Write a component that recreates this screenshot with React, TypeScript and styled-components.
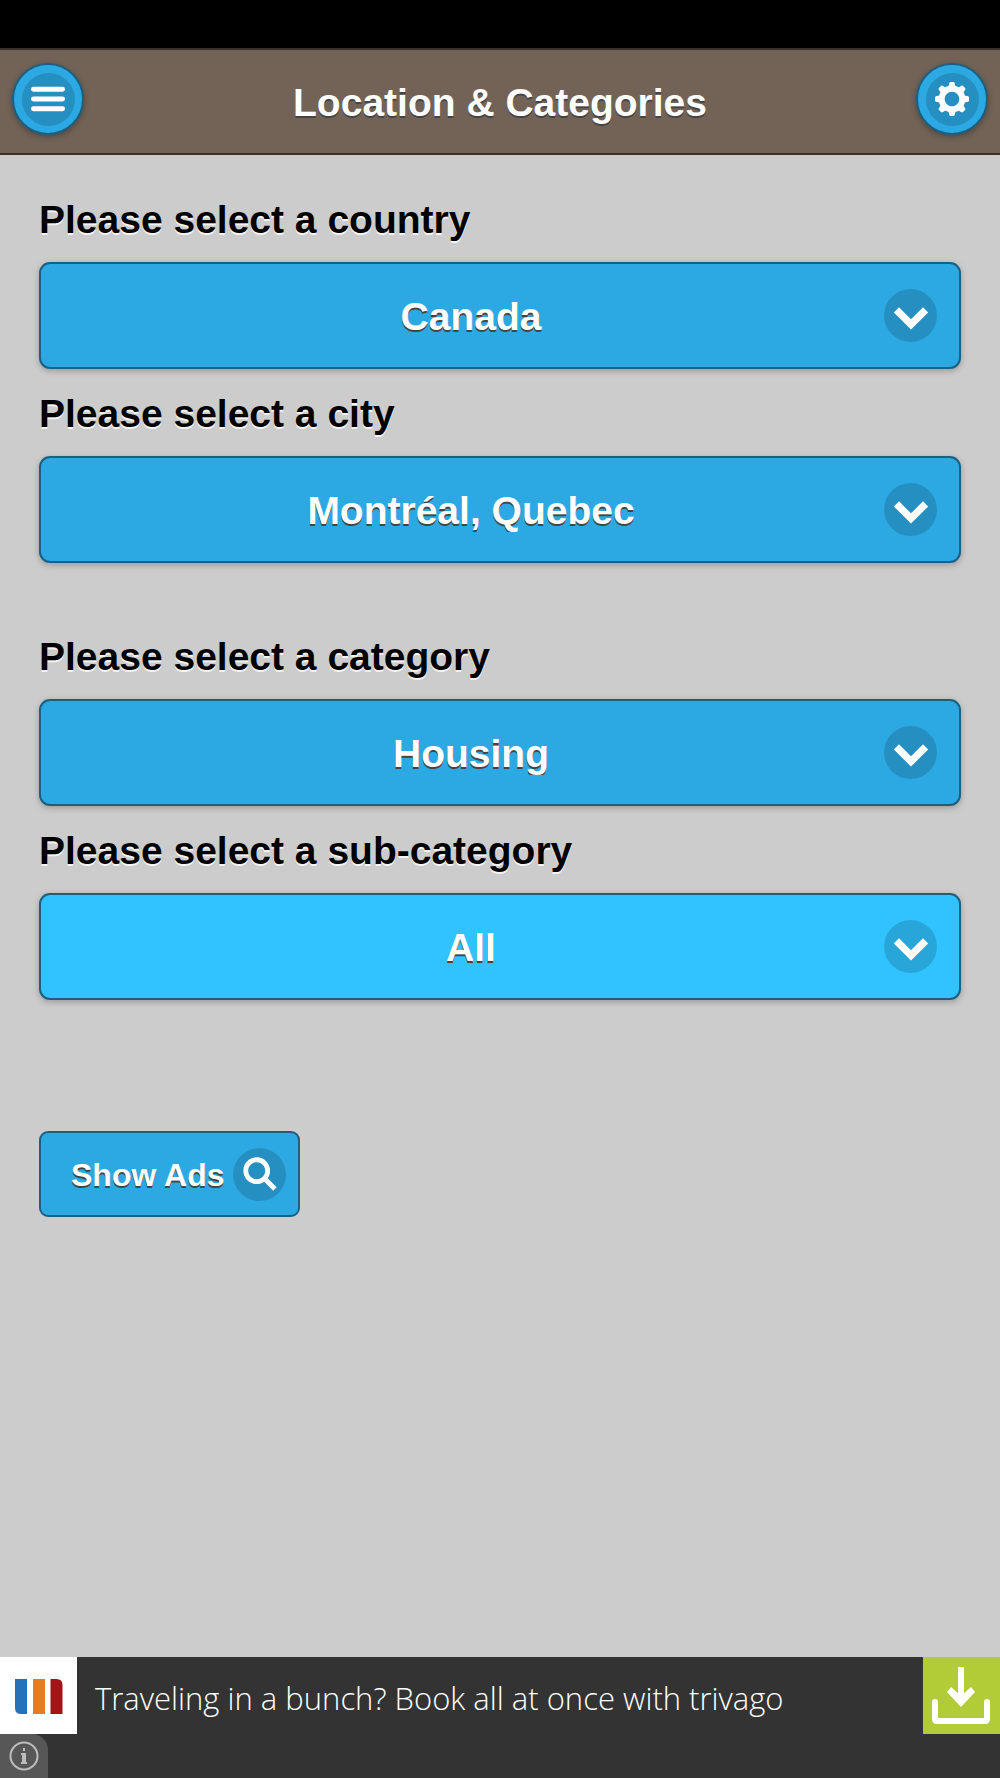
import React, { useId } from "react";
import styled, { createGlobalStyle } from "styled-components";

const color = {
  page: "#cccccc",
  header: "#736357",
  headerEdge: "#3b2f28",
  button: "#2ca9e3",
  buttonActive: "#31c3ff",
  edge: "#1b6082",
  disc: "rgba(0, 0, 0, 0.15)",
  ad: "#333333",
  lime: "#b2cc38",
};

const GlobalStyle = createGlobalStyle`
  *, *::before, *::after { box-sizing: border-box; }
  body {
    margin: 0;
    background: ${color.page};
    font-family: "Liberation Sans", Arial, Helvetica, sans-serif;
  }
`;

const Screen = styled.div`
  display: flex;
  flex-direction: column;
  min-height: 100vh;
`;

const StatusBar = styled.div`
  height: 48px;
  background: #000;
`;

const Header = styled.header`
  display: grid;
  grid-template-columns: 72px 1fr 72px;
  align-items: start;
  padding: 13px 12px 10px;
  background: ${color.header};
  border-top: 2px solid ${color.headerEdge};
  border-bottom: 2px solid ${color.headerEdge};
`;

const Title = styled.h1`
  margin: 0;
  color: #fff;
  font-size: 39px;
  line-height: 80px;
  text-align: center;
  text-shadow: 0 2px 0 #444;
`;

const RoundButton = styled.button`
  display: grid;
  place-items: center;
  width: 72px;
  height: 72px;
  padding: 0;
  border: 2px solid ${color.edge};
  border-radius: 50%;
  background: ${color.button};
  box-shadow: 0 2px 6px rgba(0, 0, 0, 0.3);
`;

const Disc = styled.span`
  display: grid;
  flex: none;
  place-items: center;
  width: 53px;
  height: 53px;
  border-radius: 50%;
  background: ${color.disc};
`;

const Glyph = styled.svg`
  display: block;
  width: 34px;
  height: 34px;
  overflow: visible;
  fill: #fff;
`;

const Form = styled.form`
  flex: 1;
  padding: 39px;
`;

const Group = styled.div`
  display: grid;
  gap: 19px;
  margin-bottom: 68px;
`;

const Field = styled.div`
  display: grid;
  gap: 16px;
`;

const Label = styled.label`
  color: #000;
  font-size: 39px;
  font-weight: bold;
  line-height: 52px;
  text-shadow: 0 2px 0 #f3f3f3;
`;

const Picker = styled.div`
  display: grid;
  align-items: center;

  & > * {
    grid-area: 1 / 1;
  }
`;

const Select = styled.select<{ $active?: boolean }>`
  appearance: none;
  width: 100%;
  height: 107px;
  padding: 2px 84px 0 26px;
  border: 2px solid ${color.edge};
  border-radius: 11px;
  background: ${(p) => (p.$active ? color.buttonActive : color.button)};
  box-shadow: 0 2px 6px rgba(0, 0, 0, 0.25);
  color: #fff;
  font: bold 39px "Liberation Sans", Arial, Helvetica, sans-serif;
  text-align: center;
  text-align-last: center;
  text-shadow: 0 2px 0 #444;
`;

const PickerIcon = styled(Disc)`
  justify-self: end;
  margin-right: 24px;
  pointer-events: none;
`;

const SubmitButton = styled.button`
  display: inline-flex;
  align-items: center;
  gap: 9px;
  height: 86px;
  margin-top: 63px;
  padding: 0 12px 0 30px;
  border: 2px solid ${color.edge};
  border-radius: 9px;
  background: ${color.button};
  color: #fff;
  font: bold 32px "Liberation Sans", Arial, Helvetica, sans-serif;
  text-shadow: 0 2px 0 #444;
`;

const SubmitText = styled.span`
  padding-top: 2px;
`;

const AdBar = styled.aside`
  height: 121px;
  background: ${color.ad};
`;

const AdLink = styled.a`
  display: flex;
  height: 77px;
  color: #fff;
  text-decoration: none;
`;

const AdTile = styled.span<{ $fill: string }>`
  flex: none;
  width: 77px;
  height: 77px;
  background: ${(p) => p.$fill};
`;

const AdText = styled.span`
  flex: 1;
  padding-left: 18px;
  font-family: "Open Sans", sans-serif;
  font-size: 31px;
  font-weight: 300;
  line-height: 83px;
  white-space: nowrap;
`;

const InfoButton = styled.button`
  display: grid;
  place-items: center;
  width: 48px;
  height: 44px;
  padding: 0;
  border: 0;
  border-top-right-radius: 16px;
  background: #575757;
`;

const BarsIcon = () => (
  <Glyph viewBox="0 0 14 14" aria-hidden="true">
    <rect y="2" width="14" height="2" rx="1" />
    <rect y="6" width="14" height="2" rx="1" />
    <rect y="10" width="14" height="2" rx="1" />
  </Glyph>
);

const GearIcon = () => (
  <Glyph viewBox="0 0 14 14" aria-hidden="true">
    <path d="M13.621,5.904l-1.036-0.259c-0.168-0.042-0.303-0.168-0.355-0.332c-0.092-0.284-0.205-0.559-0.339-0.82c-0.079-0.153-0.073-0.337,0.017-0.486l0.549-0.915c0.118-0.196,0.088-0.448-0.075-0.61l-0.862-0.863c-0.162-0.163-0.414-0.193-0.611-0.075l-0.916,0.55C9.844,2.182,9.66,2.188,9.506,2.109C9.244,1.975,8.97,1.861,8.686,1.77c-0.165-0.052-0.29-0.188-0.332-0.354L8.095,0.379C8.039,0.156,7.839,0,7.61,0H6.39C6.161,0,5.961,0.156,5.905,0.379L5.646,1.415C5.604,1.582,5.479,1.718,5.313,1.77c-0.284,0.092-0.559,0.206-0.82,0.34C4.339,2.188,4.155,2.182,4.007,2.093L3.092,1.544c-0.196-0.118-0.448-0.087-0.61,0.075L1.619,2.481C1.457,2.644,1.426,2.896,1.544,3.093l0.549,0.914c0.089,0.148,0.095,0.332,0.017,0.486C1.975,4.755,1.861,5.029,1.77,5.314c-0.053,0.164-0.188,0.29-0.354,0.332L0.379,5.905C0.156,5.961,0,6.161,0,6.39v1.219c0,0.229,0.156,0.43,0.379,0.485l1.036,0.26C1.582,8.396,1.717,8.521,1.77,8.687c0.092,0.284,0.205,0.559,0.34,0.82C2.188,9.66,2.182,9.844,2.093,9.993l-0.549,0.915c-0.118,0.195-0.087,0.448,0.075,0.61l0.862,0.862c0.162,0.163,0.414,0.193,0.61,0.075l0.915-0.549c0.148-0.089,0.332-0.095,0.486-0.017c0.262,0.135,0.536,0.248,0.82,0.34c0.165,0.053,0.291,0.187,0.332,0.354l0.259,1.036C5.961,13.844,6.16,14,6.39,14h1.22c0.229,0,0.429-0.156,0.485-0.379l0.259-1.036c0.042-0.167,0.168-0.302,0.333-0.354c0.284-0.092,0.559-0.205,0.82-0.34c0.154-0.078,0.338-0.072,0.486,0.017l0.914,0.549c0.197,0.118,0.449,0.088,0.611-0.074l0.862-0.863c0.163-0.162,0.193-0.415,0.075-0.611l-0.549-0.915c-0.089-0.148-0.096-0.332-0.017-0.485c0.134-0.263,0.248-0.536,0.339-0.82c0.053-0.165,0.188-0.291,0.355-0.333l1.036-0.259C13.844,8.039,14,7.839,14,7.61V6.39C14,6.161,13.844,5.961,13.621,5.904z M7,10c-1.657,0-3-1.343-3-3s1.343-3,3-3s3,1.343,3,3S8.657,10,7,10z" />
  </Glyph>
);

const CaratIcon = () => (
  <Glyph viewBox="0 0 14 14" aria-hidden="true">
    <polygon points="11.95,3.4 7,8.35 2.05,3.4 -0.07,5.53 7,12.6 14.07,5.53" />
  </Glyph>
);

const SearchIcon = () => (
  <Glyph viewBox="0 0 14 14" aria-hidden="true">
    <path d="M10.171,8.766c0.617-0.888,0.979-1.964,0.979-3.126c0-3.037-2.463-5.5-5.5-5.5s-5.5,2.463-5.5,5.5s2.463,5.5,5.5,5.5c1.152,0,2.223-0.355,3.104-0.962l3.684,3.683l1.414-1.414L10.171,8.766z M5.649,9.14c-1.933,0-3.5-1.567-3.5-3.5c0-1.933,1.567-3.5,3.5-3.5c1.933,0,3.5,1.567,3.5,3.5C9.149,7.572,7.582,9.14,5.649,9.14z" />
  </Glyph>
);

const BrandLogo = () => (
  <svg width="77" height="77" viewBox="0 0 77 77" aria-hidden="true">
    <path d="M15 22h12v35h-6q-6 0-6-6z" fill="#2672b8" />
    <path d="M33 22h12v35H33z" fill="#e47d22" />
    <path d="M50.500 22h6q6 0 6 6v29h-12z" fill="#a11418" />
  </svg>
);

const DownloadIcon = () => (
  <svg width="77" height="77" viewBox="0 0 77 77" fill="none" stroke="#fff" strokeWidth="6" aria-hidden="true">
    <path d="M38 10v32" />
    <path d="M28 30l10 9 10-9 4 5-14 15-14-15z" fill="#fff" stroke="none" />
    <path d="M12 45v17q0 2 2 2h48q2 0 2-2V45" strokeLinecap="round" />
  </svg>
);

const InfoIcon = () => (
  <svg width="30" height="30" viewBox="0 0 30 30" fill="none" stroke="#bdbdbd" strokeWidth="2" aria-hidden="true">
    <circle cx="15" cy="15" r="13.500" />
    <path d="M15 7v3M12 13h3M12 22h6" />
    <path d="M15 12v10" strokeWidth="4" />
  </svg>
);

interface PickFieldProps {
  label: string;
  value: string;
  active?: boolean;
}

function PickField({ label, value, active }: PickFieldProps) {
  const id = useId();
  return (
    <Field>
      <Label htmlFor={id}>{label}</Label>
      <Picker>
        <Select id={id} defaultValue={value} $active={active}>
          <option>{value}</option>
        </Select>
        <PickerIcon>
          <CaratIcon />
        </PickerIcon>
      </Picker>
    </Field>
  );
}

export default function App() {
  return (
    <>
      <GlobalStyle />
      <Screen>
        <StatusBar />
        <Header>
          <RoundButton type="button" aria-label="Menu">
            <Disc>
              <BarsIcon />
            </Disc>
          </RoundButton>
          <Title>Location &amp; Categories</Title>
          <RoundButton type="button" aria-label="Settings">
            <Disc>
              <GearIcon />
            </Disc>
          </RoundButton>
        </Header>
        <Form onSubmit={(e) => e.preventDefault()}>
          <Group>
            <PickField label="Please select a country" value="Canada" />
            <PickField label="Please select a city" value="Montréal, Quebec" />
          </Group>
          <Group>
            <PickField label="Please select a category" value="Housing" />
            <PickField label="Please select a sub-category" value="All" active />
          </Group>
          <SubmitButton type="submit">
            <SubmitText>Show Ads</SubmitText>
            <Disc>
              <SearchIcon />
            </Disc>
          </SubmitButton>
        </Form>
        <AdBar>
          <AdLink href="#">
            <AdTile $fill="#fff">
              <BrandLogo />
            </AdTile>
            <AdText>Traveling in a bunch? Book all at once with trivago</AdText>
            <AdTile $fill={color.lime}>
              <DownloadIcon />
            </AdTile>
          </AdLink>
          <InfoButton type="button" aria-label="About this ad">
            <InfoIcon />
          </InfoButton>
        </AdBar>
      </Screen>
    </>
  );
}
